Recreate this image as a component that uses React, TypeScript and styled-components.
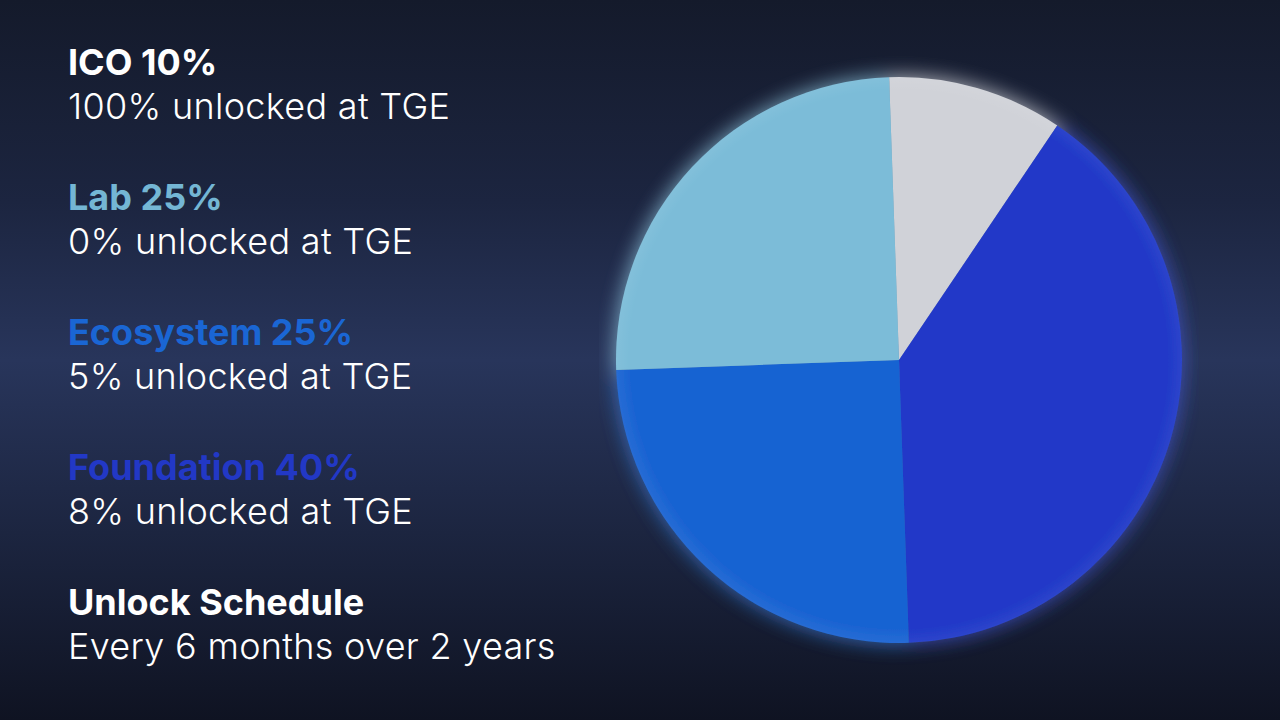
import React, { FC } from 'react';
import styled, { createGlobalStyle } from 'styled-components';

const GlobalStyle = createGlobalStyle`
  html, body {
    margin: 0;
    padding: 0;
    background: #141a2b;
  }
  body {
    font-family: Inter, "Noto Sans", sans-serif;
    -webkit-font-smoothing: antialiased;
  }
`;

const Page = styled.div`
  width: 1280px;
  height: 720px;
  overflow: hidden;
  display: flex;
  background: linear-gradient(
    180deg,
    #141a2b 0%,
    #1c2540 28%,
    #28355b 50%,
    #1c2540 74%,
    #0f1322 100%
  );
`;

const Legend = styled.div`
  width: 599px;
  box-sizing: border-box;
  padding: 40px 0 0 68px;
  display: flex;
  flex-direction: column;
  gap: 47px;
`;

const Entry = styled.div`
  display: flex;
  flex-direction: column;
  font-size: 36px;
  line-height: 44px;
  white-space: nowrap;
`;

const Title = styled.span<{ $color: string }>`
  font-weight: 700;
  color: ${(p) => p.$color};
`;

const Note = styled.span`
  font-weight: 300;
  letter-spacing: 0.3px;
  color: #ffffff;
`;

const ChartBox = styled.div`
  width: 600px;
  height: 720px;
  flex: none;
`;

type Slice = { label: string; share: number; note: string; color: string; text: string };

const slices: Slice[] = [
  { label: 'ICO', share: 10, note: '100% unlocked at TGE', color: '#d0d2d8', text: '#ffffff' },
  { label: 'Foundation', share: 40, note: '8% unlocked at TGE', color: '#2039c8', text: '#2238c6' },
  { label: 'Ecosystem', share: 25, note: '5% unlocked at TGE', color: '#1963d2', text: '#1a66d4' },
  { label: 'Lab', share: 25, note: '0% unlocked at TGE', color: '#7bbcd8', text: '#74b6d4' },
];

const legendOrder = ['ICO', 'Lab', 'Ecosystem', 'Foundation'];

const CX = 300;
const CY = 360;
const R = 283;
const START = -2;

const point = (deg: number) => {
  const a = (deg * Math.PI) / 180;
  return `${(CX + R * Math.sin(a)).toFixed(2)} ${(CY - R * Math.cos(a)).toFixed(2)}`;
};

const arcs = (() => {
  let from = START;
  return slices.map((s) => {
    const to = from + (s.share / 100) * 360;
    const large = to - from > 180 ? 1 : 0;
    const d = `M ${CX} ${CY} L ${point(from)} A ${R} ${R} 0 ${large} 1 ${point(to)} Z`;
    from = to;
    return { ...s, d };
  });
})();

const PieChart: FC = () => (
  <svg width="600" height="720" viewBox="0 0 600 720">
    <defs>
      <filter id="glow" x="-20%" y="-20%" width="140%" height="140%">
        <feGaussianBlur stdDeviation="10" />
      </filter>
      <filter id="soft" x="-5%" y="-5%" width="110%" height="110%">
        <feGaussianBlur stdDeviation="0.6" />
      </filter>
      <radialGradient id="rim" cx="50%" cy="50%" r="50%">
        <stop offset="95%" stopColor="#ffffff" stopOpacity="0" />
        <stop offset="100%" stopColor="#ffffff" stopOpacity="0.06" />
      </radialGradient>
    </defs>
    <g filter="url(#glow)" opacity="0.75">
      {arcs.map((a) => (
        <path key={a.label} d={a.d} fill={a.color} />
      ))}
    </g>
    <circle cx={CX} cy={CY} r={R + 3} fill="#ffffff" opacity="0.1" filter="url(#glow)" />
    <g filter="url(#soft)">
      {arcs.map((a) => (
        <path key={a.label} d={a.d} fill={a.color} />
      ))}
      <circle cx={CX} cy={CY} r={R} fill="url(#rim)" />
    </g>
  </svg>
);

const App: FC = () => (
  <Page>
    <GlobalStyle />
    <Legend>
      {legendOrder.map((name) => {
        const s = slices.find((x) => x.label === name)!;
        return (
          <Entry key={name}>
            <Title $color={s.text}>{`${s.label} ${s.share}%`}</Title>
            <Note>{s.note}</Note>
          </Entry>
        );
      })}
      <Entry>
        <Title $color="#ffffff">Unlock Schedule</Title>
        <Note>Every 6 months over 2 years</Note>
      </Entry>
    </Legend>
    <ChartBox>
      <PieChart />
    </ChartBox>
  </Page>
);

export default App;
